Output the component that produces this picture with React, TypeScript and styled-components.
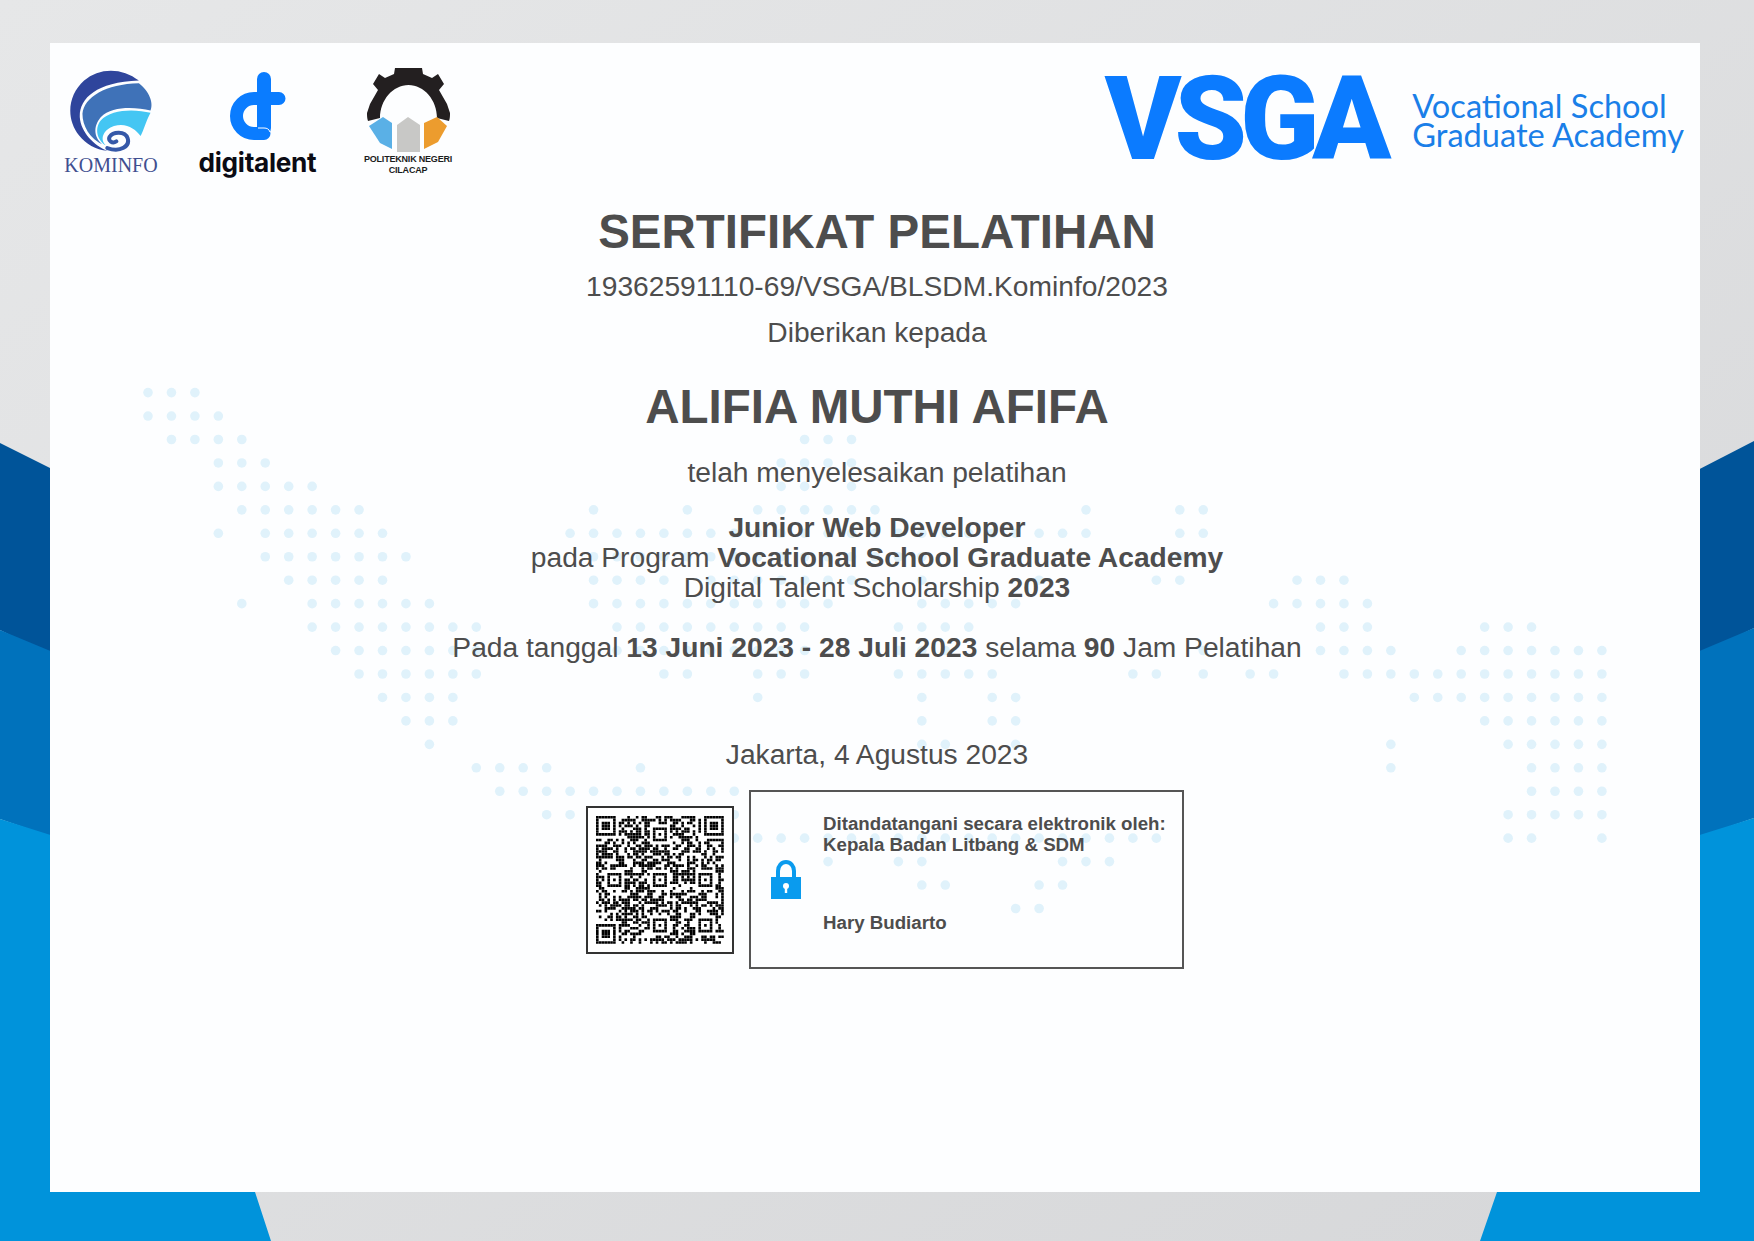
import React from "react";
import styled, { createGlobalStyle } from "styled-components";

const GlobalStyle = createGlobalStyle`
    html, body {
        margin: 0;
        padding: 0;
        background: #dfe0e2;
    }
    * {
        box-sizing: border-box;
    }
`;

const Page = styled.div`
    position: relative;
    width: 1754px;
    height: 1241px;
    padding: 43px 54px 49px 50px;
    overflow: hidden;
    font-family: "Liberation Sans", Arial, sans-serif;
    color: #4d4d4d;
`;

const BackdropArt = styled.svg`
    position: absolute;
    inset: 0;
    width: 1754px;
    height: 1241px;
`;

const Card = styled.main`
    position: relative;
    width: 1650px;
    height: 1149px;
    background: #fdfeff;
`;

const DotMap = styled.svg`
    position: absolute;
    inset: 0;
    width: 100%;
    height: 100%;
`;

const Content = styled.div`
    position: relative;
    display: flex;
    flex-direction: column;
    align-items: center;
    padding-left: 4px;
`;

const Header = styled.header`
    display: flex;
    justify-content: space-between;
    width: 100%;
    height: 161px;
    padding: 26px 16px 0 11px;
`;

const LeftLogos = styled.div`
    display: flex;
    align-items: flex-start;
`;

const RightLogo = styled.div`
    display: flex;
    align-items: flex-start;
    margin-top: -21px;
    padding-top: 23px;
`;

const LogoColumn = styled.div<{ $width: number; $gap?: number; $lift?: number }>`
    display: flex;
    flex-direction: column;
    align-items: center;
    width: ${(p) => p.$width}px;
    margin-right: ${(p) => p.$gap ?? 0}px;
    margin-top: ${(p) => -(p.$lift ?? 0)}px;
`;

const KominfoLabel = styled.span`
    margin-top: 3px;
    font-family: "Liberation Serif", serif;
    font-size: 20px;
    line-height: 20px;
    color: #3f4f90;
`;

const DigitalentLabel = styled.span`
    margin-top: 6px;
    font-family: Inter, sans-serif;
    font-weight: 700;
    font-size: 26.2px;
    line-height: 28px;
    letter-spacing: -0.3px;
    color: #0b0b14;
`;

const PoliteknikLabel = styled.span`
    display: block;
    font-size: 9px;
    line-height: 11px;
    font-weight: 700;
    letter-spacing: -0.2px;
    text-align: center;
    color: #1c1c1c;
`;

const VsgaMark = styled.span`
    font-family: Roboto, "Liberation Sans", sans-serif;
    font-weight: 900;
    font-size: 116px;
    line-height: 96px;
    letter-spacing: -7px;
    color: #0b7bff;
`;

const VsgaName = styled.span`
    margin: 20px 0 0 28px;
    font-family: Lato, sans-serif;
    font-size: 32.6px;
    line-height: 29px;
    color: #1a7fe8;
`;

const Title = styled.h1`
    margin: 0;
    font-size: 47.5px;
    line-height: 56px;
    font-weight: 700;
`;

const RecipientName = styled(Title).attrs({ as: "h2" })`
    margin-top: 31px;
`;

const Line = styled.p<{ $top: number }>`
    margin: ${(p) => p.$top}px 0 0;
    font-size: 28.2px;
    line-height: 32px;
    text-align: center;
`;

const CourseBlock = styled.div`
    margin-top: 24px;
    font-size: 28.2px;
    line-height: 30px;
    text-align: center;
`;

const SignRow = styled.div`
    display: flex;
    align-items: center;
    gap: 15px;
    margin: 20px 0 0 16px;
`;

const QrFrame = styled.div`
    display: flex;
    align-items: center;
    justify-content: center;
    width: 148px;
    height: 148px;
    border: 2px solid #333;
    background: #fff;
`;

const SignBox = styled.div`
    display: flex;
    align-items: center;
    width: 435px;
    height: 179px;
    padding: 0 10px 0 20px;
    border: 2px solid #555;
`;

const SignText = styled.div`
    display: flex;
    flex-direction: column;
    justify-content: space-between;
    height: 120px;
    margin: 0 0 14px 22px;
    font-size: 18.7px;
    line-height: 21px;
    font-weight: 700;
`;

const DigitalentMark = styled.svg`
    margin-top: 2px;
`;

// dot rows of the map, column ranges per row
const dotRows = [
    "0-2",
    "0-3",
    "1-4,28-30",
    "3-5,27-30",
    "3-7,27,28,30",
    "4-9,19,23,26-31,40,44,45",
    "3,5-10,18-40,44,45",
    "5-11,19-33,44",
    "6-10,19-22,24-30,33,38,43,44,49-51",
    "4,7-12,19-29,33-37,48-52",
    "7-14,20-28,32-35,50-52,57-59",
    "8-14,20-28,32-34,45,50-53,56-62",
    "9-14,22,23,26-28,32-36,42,43,45,47,48,51-62",
    "10-13,26,33,36,37,54-62",
    "11-13,33,36,37,57-62",
    "12,33,34,37,53,58-62",
    "14-17,21,53,59-62",
    "15-25,59-62",
    "17,18,25,58-62",
    "25-43,58,59,62",
    "29,32,33,39-41",
    "33,34,38,39",
    "37,38",
];

function expandRow(row: string) {
    const cols: number[] = [];
    row.split(",").forEach((part) => {
        const [from, to] = part.split("-").map(Number);
        for (let c = from; c <= (to ?? from); c++) cols.push(c);
    });
    return cols;
}

function buildQrPath() {
    const size = 45;
    const cells: boolean[][] = [];
    let seed = 193625;
    const next = () => {
        seed = (seed * 1103515245 + 12345) & 0x7fffffff;
        return (seed >> 12) % 100;
    };
    for (let y = 0; y < size; y++) {
        cells[y] = [];
        for (let x = 0; x < size; x++) cells[y][x] = next() < 56;
    }
    const stamp = (ox: number, oy: number, n: number) => {
        for (let y = -1; y <= n; y++) {
            for (let x = -1; x <= n; x++) {
                if (!cells[oy + y] || cells[oy + y][ox + x] === undefined) continue;
                const edge = x === 0 || y === 0 || x === n - 1 || y === n - 1;
                const inside = x >= 0 && y >= 0 && x < n && y < n;
                const core = n === 7 ? x >= 2 && x <= 4 && y >= 2 && y <= 4 : x === 2 && y === 2;
                cells[oy + y][ox + x] = inside && (edge || core);
            }
        }
    };
    [4, 20, 36].forEach((ay) =>
        [4, 20, 36].forEach((ax) => {
            if ((ax === 4 && ay === 4) || (ax === 36 && ay === 4) || (ax === 4 && ay === 36)) return;
            stamp(ax, ay, 5);
        })
    );
    stamp(0, 0, 7);
    stamp(38, 0, 7);
    stamp(0, 38, 7);
    let d = "";
    cells.forEach((row, y) =>
        row.forEach((on, x) => {
            if (on) d += `M${x} ${y}h.92v.92h-.92z`;
        })
    );
    return d;
}

function Backdrop() {
    return (
        <BackdropArt viewBox="0 0 1754 1241" aria-hidden="true">
            <defs>
                <linearGradient id="paper" x1="0" y1="0" x2="1" y2="1">
                    <stop offset="0" stopColor="#e6e7e8" />
                    <stop offset="1" stopColor="#d6d7d9" />
                </linearGradient>
            </defs>
            <rect width="1754" height="1241" fill="url(#paper)" />
            <polygon points="0,443 60,473 60,660 0,630" fill="#005499" />
            <polygon points="0,630 60,655 60,840 0,819" fill="#0072bc" />
            <polygon points="0,819 60,838 60,1192 255,1192 271,1241 0,1241" fill="#0093db" />
            <polygon points="1754,441 1690,474 1690,660 1754,628" fill="#005499" />
            <polygon points="1754,628 1690,655 1690,840 1754,818" fill="#0072bc" />
            <polygon points="1754,818 1690,838 1690,1192 1497,1192 1480,1241 1754,1241" fill="#0093db" />
        </BackdropArt>
    );
}

function Dots() {
    return (
        <DotMap viewBox="50 43 1650 1149" aria-hidden="true">
            {dotRows.map((row, j) =>
                expandRow(row).map((i) => (
                    <circle key={`${j}-${i}`} cx={148 + 23.45 * i} cy={392.6 + 23.45 * j} r="4.8" fill="#e0f2fb" />
                ))
            )}
        </DotMap>
    );
}

function KominfoLogo() {
    return (
        <svg width="84" height="83" viewBox="92 90 248 250" aria-hidden="true">
            <path d="M300 125C250 85 180 85 135 125C85 170 80 240 120 290C140 315 170 333 205 336C165 320 125 280 122 235C120 180 170 130 300 125Z" fill="#2f459c" />
            <path d="M300 133C340 165 342 200 335 215C290 205 220 200 185 235C160 265 165 300 195 320C150 300 130 260 130 225C135 175 200 135 300 133Z" fill="#3f72b8" />
            <path d="M335 222C320 250 315 275 305 292C290 270 260 250 225 262C195 272 180 300 200 320C175 305 165 270 185 245C215 210 290 210 335 222Z" fill="#44c6f3" />
            <path d="M205 328C245 342 274 322 266 298C258 276 222 278 212 294C206 306 220 316 232 308" fill="none" stroke="#3558a8" strokeWidth="12" strokeLinecap="round" />
        </svg>
    );
}

function DigitalentLogo() {
    return (
        <DigitalentMark width="60" height="72" viewBox="228 71 60 72" aria-hidden="true">
            <path d="M279 98.5H254A17.5 17.5 0 0 0 254 133.5H264" fill="none" stroke="#0a7cff" strokeWidth="13" strokeLinecap="round" />
            <path d="M264 79V128" fill="none" stroke="#0a7cff" strokeWidth="14" strokeLinecap="round" />
            <path d="M258 128H264C267 128 269 129 270 132" fill="none" stroke="#fdfeff" strokeWidth="1" />
        </DigitalentMark>
    );
}

function PoliteknikLogo() {
    return (
        <svg width="86" height="88" viewBox="365 66 86 88" aria-hidden="true">
            <path
                d="M394 74L395 68H422L423 74L432 78L438 74L444 84L439 90L447 104L450 113C450 116 450 118 449 121L437 118C437 100 424 85 408.5 85C393 85 380 100 380 118L368 121C367 118 367 116 367 113L370 104L378 90L373 84L379 74L385 78Z"
                fill="#231f20"
            />
            <polygon points="369,126 383,117 392,123 392,149 380,143" fill="#5ab0e6" />
            <polygon points="397,125 408,117 420,125 420,152 397,152" fill="#c8c8c6" />
            <polygon points="424,123 437,117 447,126 438,142 424,149" fill="#ec9c2e" />
        </svg>
    );
}

function LockIcon() {
    return (
        <svg width="30" height="39" viewBox="0 0 30 39" aria-hidden="true">
            <path d="M7 18V11C7 6 10.5 2 15 2S23 6 23 11V18" fill="none" stroke="#0a9bee" strokeWidth="4" />
            <rect y="17" width="30" height="22" fill="#0a9bee" />
            <circle cx="15" cy="26" r="3" fill="#fff" />
            <rect x="13.8" y="27" width="2.4" height="6" fill="#fff" />
        </svg>
    );
}

const qrPath = buildQrPath();

export default function App() {
    return (
        <Page>
            <GlobalStyle />
            <Backdrop />
            <Card>
                <Dots />
                <Content>
                    <Header>
                        <LeftLogos>
                            <LogoColumn $width={92} $gap={41.5}>
                                <KominfoLogo />
                                <KominfoLabel>KOMINFO</KominfoLabel>
                            </LogoColumn>
                            <LogoColumn $width={118} $gap={41.5}>
                                <DigitalentLogo />
                                <DigitalentLabel>digitalent</DigitalentLabel>
                            </LogoColumn>
                            <LogoColumn $width={100} $lift={3}>
                                <PoliteknikLogo />
                                <PoliteknikLabel>
                                    POLITEKNIK NEGERI
                                    <br />
                                    CILACAP
                                </PoliteknikLabel>
                            </LogoColumn>
                        </LeftLogos>
                        <RightLogo>
                            <VsgaMark>VSGA</VsgaMark>
                            <VsgaName>
                                Vocational School
                                <br />
                                Graduate Academy
                            </VsgaName>
                        </RightLogo>
                    </Header>
                    <Title>SERTIFIKAT PELATIHAN</Title>
                    <Line $top={10}>19362591110-69/VSGA/BLSDM.Kominfo/2023</Line>
                    <Line $top={14}>Diberikan kepada</Line>
                    <RecipientName>ALIFIA MUTHI AFIFA</RecipientName>
                    <Line $top={21}>telah menyelesaikan pelatihan</Line>
                    <CourseBlock>
                        <b>Junior Web Developer</b>
                        <br />
                        pada Program <b>Vocational School Graduate Academy</b>
                        <br />
                        Digital Talent Scholarship <b>2023</b>
                    </CourseBlock>
                    <Line $top={29}>
                        Pada tanggal <b>13 Juni 2023 - 28 Juli 2023</b> selama <b>90</b> Jam Pelatihan
                    </Line>
                    <Line $top={75}>Jakarta, 4 Agustus 2023</Line>
                    <SignRow>
                        <QrFrame>
                            <svg width="128" height="128" viewBox="0 0 45 45" aria-hidden="true">
                                <path d={qrPath} fill="#000" />
                            </svg>
                        </QrFrame>
                        <SignBox>
                            <LockIcon />
                            <SignText>
                                <span>
                                    Ditandatangani secara elektronik oleh:
                                    <br />
                                    Kepala Badan Litbang &amp; SDM
                                </span>
                                <span>Hary Budiarto</span>
                            </SignText>
                        </SignBox>
                    </SignRow>
                </Content>
            </Card>
        </Page>
    );
}
